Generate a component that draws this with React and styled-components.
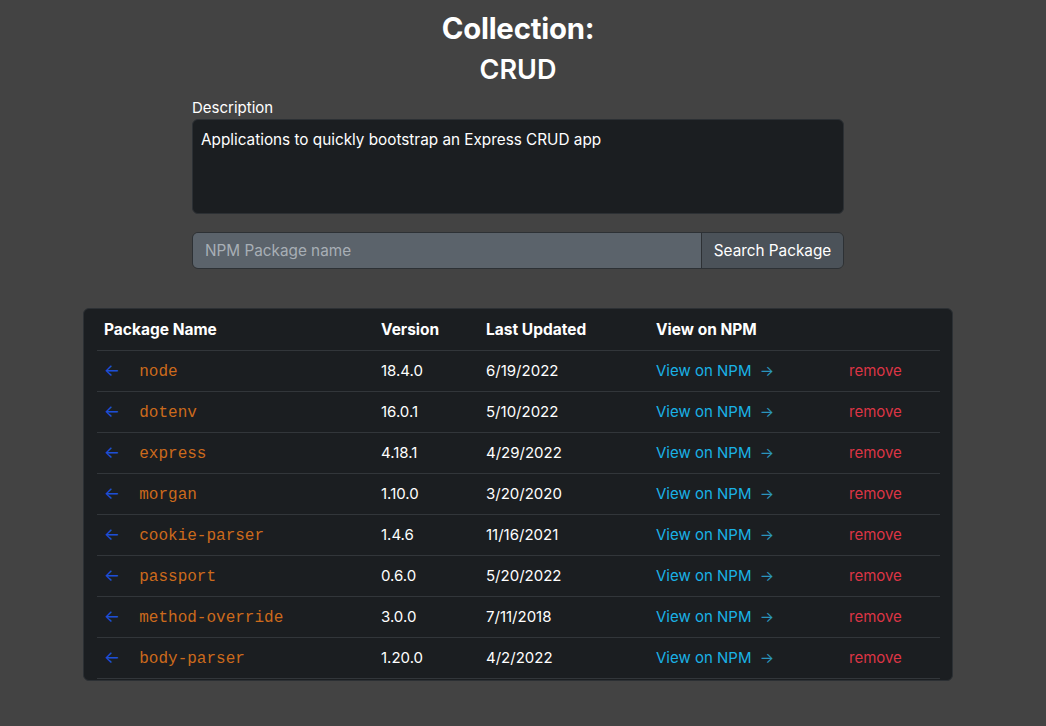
import React from 'react'
import styled, { createGlobalStyle } from 'styled-components'

const packages = [
    { name: 'node', version: '18.4.0', updated: '6/19/2022' },
    { name: 'dotenv', version: '16.0.1', updated: '5/10/2022' },
    { name: 'express', version: '4.18.1', updated: '4/29/2022' },
    { name: 'morgan', version: '1.10.0', updated: '3/20/2020' },
    { name: 'cookie-parser', version: '1.4.6', updated: '11/16/2021' },
    { name: 'passport', version: '0.6.0', updated: '5/20/2022' },
    { name: 'method-override', version: '3.0.0', updated: '7/11/2018' },
    { name: 'body-parser', version: '1.20.0', updated: '4/2/2022' },
]

const App = () => {
    return(
        <Page>
            <GlobalStyle />
            <Title>Collection:</Title>
            <SubTitle>CRUD</SubTitle>

            <Form>
                <Label>Description</Label>
                <TextArea defaultValue='Applications to quickly bootstrap an Express CRUD app' />
                <InputGroup>
                    <SearchInput placeholder='NPM Package name' />
                    <SearchButton>Search Package</SearchButton>
                </InputGroup>
            </Form>

            <Card>
                <Table>
                    <colgroup>
                        <col style={{ width: 277 }} />
                        <col style={{ width: 105 }} />
                        <col style={{ width: 170 }} />
                        <col style={{ width: 193 }} />
                        <col />
                    </colgroup>
                    <thead>
                        <tr>
                            <Th>Package Name</Th>
                            <Th>Version</Th>
                            <Th>Last Updated</Th>
                            <Th>View on NPM</Th>
                            <Th />
                        </tr>
                    </thead>
                    <tbody>
                        {packages.map(p => (
                            <tr key={p.name}>
                                <Td>
                                    <BackArrow>←</BackArrow>
                                    <PkgName>{p.name}</PkgName>
                                </Td>
                                <Td>{p.version}</Td>
                                <Td>{p.updated}</Td>
                                <Td>
                                    <NpmLink href='#'>View on NPM <span>→</span></NpmLink>
                                </Td>
                                <Td><Remove>remove</Remove></Td>
                            </tr>
                        ))}
                    </tbody>
                </Table>
            </Card>
        </Page>
    )
}

export default App


//GLOBAL
const GlobalStyle = createGlobalStyle`
    html, body {
        margin: 0;
        background: #434343;
        color: #fff;
        font-family: Inter, "Noto Sans", sans-serif;
    }
`;

//PAGE
const Page = styled.div`
    min-height: 726px;
    display: flex;
    flex-direction: column;
    align-items: center;
    padding: 10px 10px 0 0;
    box-sizing: border-box;
`;

//TITLES
const Title = styled.h1`
    margin: 0;
    font-size: 29.3px;
    font-weight: 700;
    line-height: 38px;
    letter-spacing: -0.2px;
`;

const SubTitle = styled.h2`
    margin: 6px 0 12px;
    font-size: 27px;
    font-weight: 600;
    line-height: 32px;
`;

//FORM
const Form = styled.div`
    width: 652px;
    display: flex;
    flex-direction: column;
`;

const Label = styled.label`
    font-size: 15px;
    line-height: 20px;
    margin-bottom: 1px;
`;

const TextArea = styled.textarea`
    height: 95px;
    box-sizing: border-box;
    background: #1b1e21;
    color: #fff;
    border: 1px solid #2c3034;
    border-radius: 6px;
    padding: 10px 8px;
    font-family: Inter, "Noto Sans", sans-serif;
    font-size: 15.3px;
    resize: none;
    outline: none;
`;

const InputGroup = styled.div`
    display: flex;
    margin-top: 18px;
    height: 37px;
    border: 1px solid #2d3135;
    border-radius: 6px;
    overflow: hidden;
    box-sizing: border-box;
`;

const SearchInput = styled.input`
    flex: 1;
    background: #5b636b;
    border: none;
    border-right: 1px solid #2d3135;
    padding: 0 12px;
    color: #fff;
    font-family: Inter, "Noto Sans", sans-serif;
    font-size: 15.3px;
    outline: none;
    &::placeholder {
        color: #a8afb6;
    }
`;

const SearchButton = styled.button`
    width: 141px;
    background: #4b5259;
    border: none;
    color: #fff;
    font-family: Inter, "Noto Sans", sans-serif;
    font-size: 15.3px;
    cursor: pointer;
`;

//TABLE CARD
const Card = styled.div`
    margin-top: 39px;
    width: 870px;
    box-sizing: border-box;
    background: #1b1e21;
    border: 1px solid #2c3034;
    border-radius: 6px;
    padding: 0 12px 1px 13px;
`;

const Table = styled.table`
    width: 100%;
    table-layout: fixed;
    border-collapse: collapse;
    font-size: 15px;
`;

const Th = styled.th`
    text-align: left;
    font-weight: 700;
    font-size: 15.5px;
    padding: 0 7px;
    height: 41px;
    border-bottom: 1px solid #32363a;
`;

const Td = styled.td`
    padding: 0 7px;
    height: 40px;
    line-height: 20px;
    border-bottom: 1px solid #32363a;
    white-space: nowrap;
    vertical-align: middle;
`;

const BackArrow = styled.span`
    color: #1d4fd6;
    font-size: 17px;
    margin-right: 19px;
`;

const PkgName = styled.span`
    font-family: "Liberation Mono", monospace;
    font-size: 16px;
    line-height: 20px;
    color: #cc6a1c;
`;

const NpmLink = styled.a`
    color: #1ab2e6;
    text-decoration: none;
    span {
        color: #2b95bc;
        margin-left: 4px;
    }
`;

const Remove = styled.span`
    color: #dc3545;
`;
